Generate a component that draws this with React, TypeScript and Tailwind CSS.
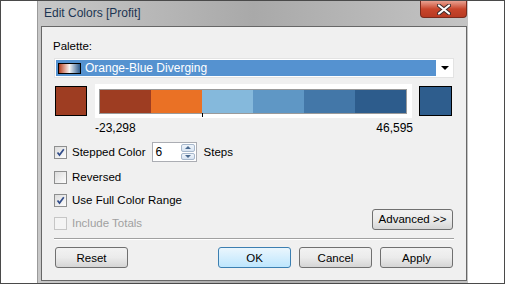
const font = { fontFamily: '"Liberation Sans", Arial, sans-serif' };

const Check = ({ checked, disabled }: { checked?: boolean; disabled?: boolean }) => (
  <div
    className={`w-[13px] h-[13px] border flex items-center justify-center ${
      disabled ? "border-[#c6c6c6] bg-[#f4f4f4]" : "border-[#8e8f8f] bg-gradient-to-br from-[#dcdcdc] to-[#fdfdfd]"
    }`}
  >
    {checked && (
      <svg width="9" height="9" viewBox="0 0 9 9">
        <path d="M1.5 4.5 L3.5 7 L7.8 1.2" fill="none" stroke="#324d8a" strokeWidth="1.7" />
      </svg>
    )}
  </div>
);

const Btn = ({ label, primary }: { label: string; primary?: boolean }) => (
  <div
    className={`w-[73px] h-[21px] rounded-[3px] border flex items-center justify-center text-black ${
      primary
        ? "border-[#3c7fb1] bg-gradient-to-b from-[#eaf6fd] to-[#bee6fd]"
        : "border-[#707070] bg-gradient-to-b from-[#f2f2f2] via-[#ebebeb] to-[#d5d5d5]"
    }`}
  >
    {label}
  </div>
);

const steps = ["#9e3d22", "#ea7125", "#85b9dc", "#5f97c5", "#4377a8", "#2d5c8c"];

export default function App() {
  return (
    <div className="w-[505px] h-[284px] border border-[#4a4a4a] bg-white flex" style={font}>
      <div className="ml-[36px] w-[431px] h-full flex flex-col border-l border-[#9a9a9a] bg-gradient-to-r from-[#c8c8c8] via-[#a9a9a9] to-[#c4c4c4]">
        {/* title bar */}
        <div className="h-[25px] flex items-start justify-between">
          <div className="pl-[6px] pt-[3px] text-[12px] text-[#1c3552] leading-[18px]">Edit Colors [Profit]</div>
          <div className="mr-[1px] w-[47px] h-[17px] rounded-b-[4px] border border-t-0 border-[#7a2a1c] bg-gradient-to-b from-[#e8a090] via-[#c8452b] to-[#b83a22] flex items-center justify-center">
            <svg width="14" height="11" viewBox="0 0 14 11">
              <path d="M2 1.5 L12 9.5 M12 1.5 L2 9.5" stroke="#3a2a2a" strokeWidth="4" strokeLinecap="round" />
              <path d="M2 1.5 L12 9.5 M12 1.5 L2 9.5" stroke="#ffffff" strokeWidth="2.2" strokeLinecap="round" />
            </svg>
          </div>
        </div>
        {/* client */}
        <div className="ml-[3px] w-[426px] h-[255px] border border-[#676767] bg-[#f0f0f0] flex flex-col text-[11.5px] text-black leading-[16px]">
          <div className="mt-[11px] ml-[11px]">Palette:</div>
          <div className="mt-[4px] ml-[12px] w-[400px] h-[20px] bg-white border border-[#e3e3e3] flex items-center pl-[1px]">
            <div className="w-[380px] h-[16px] bg-[#5592d0] flex items-center pl-[2px] gap-[4px]">
              <div className="w-[23px] h-[11px] border border-black bg-gradient-to-r from-[#b03a18] via-[#f4f4f4] to-[#2b5a8c]" />
              <span className="text-white text-[12px]">Orange-Blue Diverging</span>
            </div>
            <div className="flex-1 flex items-center justify-center">
              <svg width="8" height="4" viewBox="0 0 8 4">
                <path d="M0 0 H8 L4 4 Z" fill="#000" />
              </svg>
            </div>
          </div>
          <div className="mt-[6px] ml-[13px] flex items-center">
            <div className="w-[32px] h-[30px] border border-black bg-[#9e3d22]" />
            <div className="ml-[8px] w-[317px] h-[34px] bg-white pl-[4px] flex items-center">
              <div className="relative w-[308px] h-[25px] border border-[#9a9a9a] flex">
                {steps.map((c, i) => (
                  <div key={i} className="flex-1 h-full" style={{ backgroundColor: c }} />
                ))}
                <div className="absolute left-[102px] top-[23px] w-px h-[4px] bg-black" />
              </div>
            </div>
            <div className="ml-[7px] w-[33px] h-[30px] border border-black bg-[#2e5d8d]" />
          </div>
          <div className="mt-[2px] ml-[53px] w-[318px] flex justify-between text-[12px]">
            <span>-23,298</span>
            <span>46,595</span>
          </div>
          <div className="mt-[6px] ml-[12px] h-[20px] flex items-center">
            <Check checked />
            <span className="ml-[5px]">Stepped Color</span>
            <div className="ml-[6px] w-[45px] h-[20px] bg-white border border-[#abadb3] flex items-center justify-between pl-[3px] pr-[1px]">
              <span className="text-[12px]">6</span>
              <div className="w-[14px] h-[16px] flex flex-col gap-[1px]">
                {[0, 1].map((k) => (
                  <div key={k} className="flex-1 border border-[#a7b8cc] rounded-[2px] bg-gradient-to-b from-[#f0f5fb] to-[#d8e4f2] flex items-center justify-center">
                    <svg width="6" height="3" viewBox="0 0 6 3">
                      <path d={k === 0 ? "M0 3 L3 0 L6 3 Z" : "M0 0 H6 L3 3 Z"} fill="#4a6a90" />
                    </svg>
                  </div>
                ))}
              </div>
            </div>
            <span className="ml-[7px]">Steps</span>
          </div>
          <div className="mt-[5px] ml-[12px] h-[20px] flex items-center">
            <Check />
            <span className="ml-[5px]">Reversed</span>
          </div>
          <div className="mt-[3px] ml-[12px] h-[20px] flex items-center">
            <Check checked />
            <span className="ml-[5px]">Use Full Color Range</span>
          </div>
          <div className="mt-[3px] ml-[12px] mr-[13px] h-[20px] flex items-center justify-between">
            <div className="flex items-center text-[#a0a0a0]">
              <Check disabled />
              <span className="ml-[5px]">Include Totals</span>
            </div>
            <div className="-mt-[8px] w-[81px] h-[21px] rounded-[3px] border border-[#707070] bg-gradient-to-b from-[#f2f2f2] via-[#ebebeb] to-[#d5d5d5] flex items-center justify-center">
              Advanced &gt;&gt;
            </div>
          </div>
          <div className="mt-[5px] ml-[12px] w-[400px] h-[2px] border-t border-[#a0a0a0] border-b border-b-white" />
          <div className="mt-[7px] ml-[13px] w-[398px] flex">
            <Btn label="Reset" />
            <div className="ml-auto flex gap-[8px]">
              <Btn label="OK" primary />
              <Btn label="Cancel" />
              <Btn label="Apply" />
            </div>
          </div>
        </div>
      </div>
    </div>
  );
}
